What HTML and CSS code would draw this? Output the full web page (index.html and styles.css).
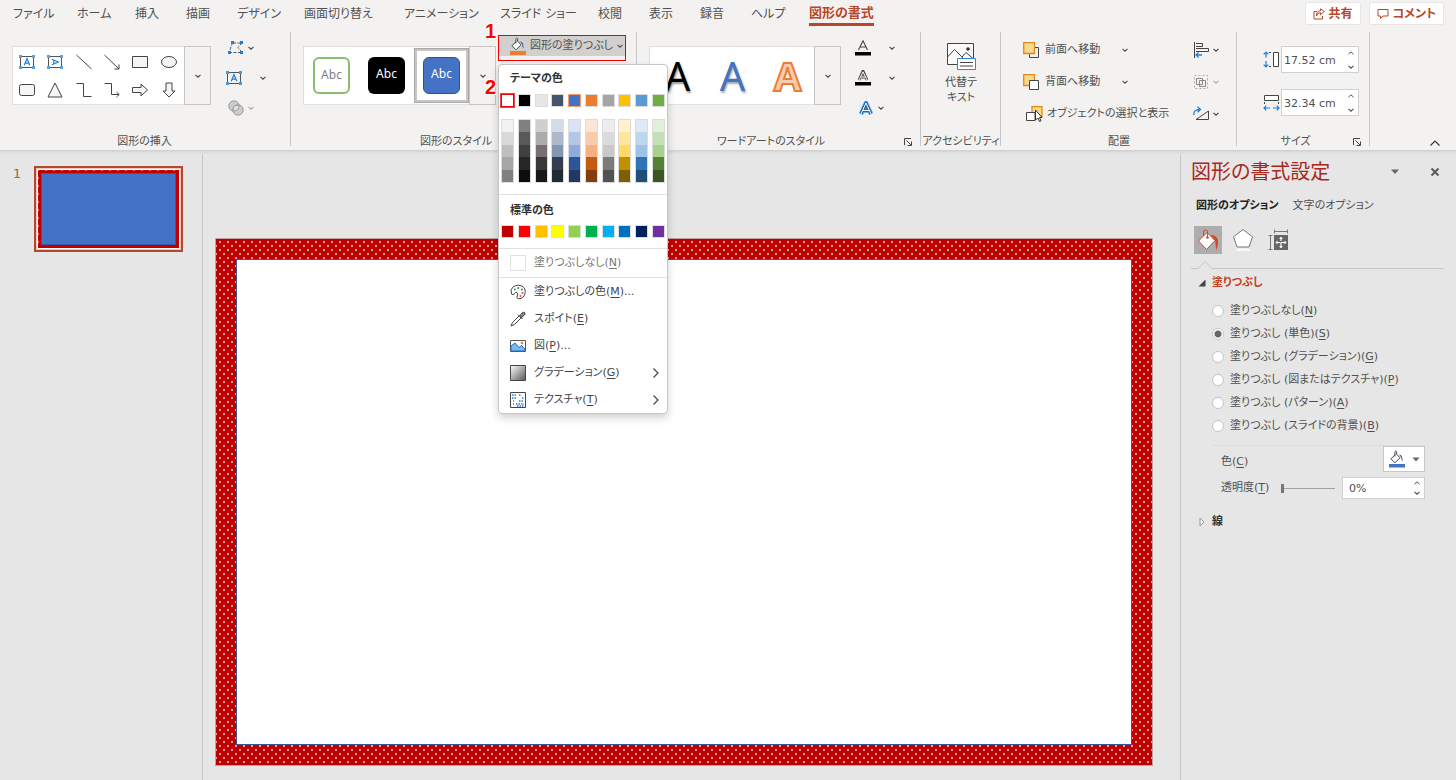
FILE: index.html
```html
<!DOCTYPE html>
<html lang="ja">
<head>
<meta charset="utf-8">
<meta name="viewport" content="width=device-width, initial-scale=1">
<title>図形の書式</title>
<link rel="stylesheet" href="styles.css">
</head>
<body>
<svg class="defs" aria-hidden="true">
  <symbol id="chev" viewBox="0 0 8 8"><path d="M1.5 2.8 4 5.2 6.5 2.8" fill="none" stroke="currentColor" stroke-width="1.1"/></symbol>
  <symbol id="chev-up" viewBox="0 0 8 8"><path d="M1.5 5.2 4 2.8 6.5 5.2" fill="none" stroke="currentColor" stroke-width="1"/></symbol>
  <symbol id="bucket" viewBox="0 0 18 18">
    <path d="M7.2 4.6 3 8.8 7 12.8 12 7.8 8.6 4.2V2.2Q8.6 1 7.6 1.2 6.8 1.4 6.9 2.4V6.5" fill="#fff" stroke="#444" stroke-width="1"/>
    <path d="M11 4.5Q14.8 4.2 14.6 11.5 13 9.8 13.3 7.4Z" fill="#2e5fb0"/>
  </symbol>
  <symbol id="launcher" viewBox="0 0 10 10"><path d="M1.5 8V1.5H8M3.5 3.5 8 8M8.5 4.5V8.5H4.5" fill="none" stroke="#444" stroke-width="1"/></symbol>
</svg>

<header class="topbar">
  <nav class="tabs">
    <a href="#">ファイル</a><a href="#">ホーム</a><a href="#">挿入</a><a href="#">描画</a><a href="#">デザイン</a><a href="#">画面切り替え</a><a href="#">アニメーション</a><a href="#">スライド ショー</a><a href="#">校閲</a><a href="#">表示</a><a href="#">録音</a><a href="#">ヘルプ</a><a href="#" class="current">図形の書式</a>
  </nav>
  <div class="top-actions">
    <button class="pill"><svg width="12" height="12" viewBox="0 0 12 12"><path d="M4 3.5H1V11H9.5V8M3.5 8Q4 4.8 7.5 4.7V6.8L11.3 3.5 7.5.8V2.8Q3.2 3.2 3.5 8Z" fill="none" stroke="#b7472a"/></svg>共有</button>
    <button class="pill"><svg width="12" height="12" viewBox="0 0 12 12"><path d="M1 1.5H11V8H6L3.5 10.5V8H1Z" fill="none" stroke="#b7472a"/></svg>コメント</button>
  </div>
</header>

<section class="ribbon">
  <div class="group g-insert">
    <div class="group-body">
      <div class="gallery">
        <div class="shapes">
          <button aria-label="テキスト ボックス"><svg width="18" height="16" viewBox="0 0 18 16"><path d="M2.5 2.5H15.5V13.5H2.5Z" fill="none" stroke="#555"/><path d="M1 1H4V4H1ZM14 1H17V4H14ZM1 12H4V15H1ZM14 12H17V15H14Z" fill="#5aa3e0"/><path d="M6.2 11.2 9 4.6 11.8 11.2M7.2 9.2H10.8" fill="none" stroke="#1f7fd4" stroke-width="1.2"/></svg></button>
          <button aria-label="縦書きテキスト ボックス"><svg width="18" height="16" viewBox="0 0 18 16"><path d="M2.5 2.5H15.5V13.5H2.5Z" fill="none" stroke="#555"/><path d="M1 1H4V4H1ZM14 1H17V4H14ZM1 12H4V15H1ZM14 12H17V15H14Z" fill="#5aa3e0"/><path d="M5.8 5.2 12.4 8 5.8 10.8M7.8 6.2V9.8" fill="none" stroke="#1f7fd4" stroke-width="1.2"/></svg></button>
          <button aria-label="線"><svg width="18" height="16" viewBox="0 0 18 16"><path d="M1.5 1 16.500 15" stroke="#444" fill="none"/></svg></button>
          <button aria-label="矢印"><svg width="18" height="16" viewBox="0 0 18 16"><path d="M1.500 1 16 15M16 10.500V15H11.500" stroke="#444" fill="none"/></svg></button>
          <button aria-label="四角形"><svg width="18" height="16" viewBox="0 0 18 16"><path d="M1.500 2.500H16.500V13.500H1.500Z" stroke="#444" fill="#f5f5f5"/></svg></button>
          <button aria-label="楕円"><svg width="18" height="16" viewBox="0 0 18 16"><ellipse cx="9" cy="8" rx="7.500" ry="5.500" stroke="#444" fill="#f5f5f5"/></svg></button>
          <button aria-label="角丸四角形"><svg width="18" height="16" viewBox="0 0 18 16"><rect x="1.500" y="2.500" width="15" height="11" rx="2" stroke="#444" fill="#f5f5f5"/></svg></button>
          <button aria-label="三角形"><svg width="18" height="16" viewBox="0 0 18 16"><path d="M9 1 16 15H2Z" stroke="#444" fill="#f5f5f5"/></svg></button>
          <button aria-label="カギ線コネクタ"><svg width="18" height="16" viewBox="0 0 18 16"><path d="M1.500 1.500H8.500V14.500H16.500" stroke="#444" fill="none"/></svg></button>
          <button aria-label="カギ線矢印コネクタ"><svg width="18" height="16" viewBox="0 0 18 16"><path d="M1.500 1.500H8.500V12.500H16M13.500 10 16.200 12.500 13.500 15" stroke="#444" fill="none"/></svg></button>
          <button aria-label="右矢印"><svg width="18" height="16" viewBox="0 0 18 16"><path d="M1.500 5.500H10V2.200L16.500 8 10 13.800V10.500H1.500Z" stroke="#444" fill="#f5f5f5"/></svg></button>
          <button aria-label="下矢印"><svg width="18" height="16" viewBox="0 0 18 16"><path d="M6 1H12V9H15L9 15 3 9H6Z" stroke="#444" fill="#f5f5f5"/></svg></button>
        </div>
        <button class="expand" aria-label="その他"><svg width="8" height="8"><use href="#chev"/></svg></button>
      </div>
      <div class="tools tools-insert">
        <button class="tool" aria-label="図形の編集"><svg width="16" height="14" viewBox="0 0 16 14"><path d="M5 2H14L10 6.500 14 11.500H2Q2 6 5 2" fill="none" stroke="#555" stroke-dasharray="3 1.500"/><path d="M3 0H6V3H3ZM12 0H15V3H12ZM12 10H15V13H12ZM0 10H3V13H0Z" fill="#1f7fd4"/></svg><svg width="8" height="8"><use href="#chev"/></svg></button>
        <button class="tool wide" aria-label="テキスト ボックスの描画"><svg width="16" height="16" viewBox="1 0 16 16"><path d="M2.500 2.500H15.500V13.500H2.500Z" fill="none" stroke="#555"/><path d="M1 1H4V4H1ZM14 1H17V4H14ZM1 12H4V15H1ZM14 12H17V15H14Z" fill="#4a98dc"/><path d="M6.200 11.200 9 4.600 11.800 11.200M7.200 9.200H10.800" fill="none" stroke="#1f7fd4" stroke-width="1.200"/></svg><svg width="8" height="8"><use href="#chev"/></svg></button>
        <button class="tool off" aria-label="図形の結合" disabled><svg width="16" height="16" viewBox="0 0 16 16"><circle cx="6" cy="6" r="5.200" fill="#ccc" stroke="#999"/><circle cx="10" cy="10" r="5.200" fill="#ccc" stroke="#999"/><path d="M5 10Q4.500 5 10.800 5.200 12 10 6 11.200Z" fill="#e2e2e2" stroke="#999"/></svg><svg width="8" height="8"><use href="#chev"/></svg></button>
      </div>
    </div>
    <div class="group-label">図形の挿入</div>
  </div>

  <div class="group g-style">
    <div class="group-body">
      <div class="gallery">
        <div class="styles">
          <button><span class="preset outline">Abc</span></button>
          <button><span class="preset dark">Abc</span></button>
          <button class="picked"><span class="preset blue">Abc</span></button>
        </div>
        <button class="expand" aria-label="その他"><svg width="8" height="8"><use href="#chev"/></svg></button>
      </div>
      <div class="fill-anchor">
        <button class="fill-button" aria-haspopup="menu"><span class="fill-face"><svg width="18" height="18" viewBox="0 0 18 18"><use href="#bucket" width="18" height="18"/><path d="M1 14H17V18H1Z" fill="#ed7d31"/></svg>図形の塗りつぶし<svg width="8" height="8"><use href="#chev"/></svg></span></button>
        <span class="callout one">1</span>
        <span class="callout two">2</span>
        <div class="menu">
          <h3>テーマの色</h3>
          <div class="swatches" id="theme"></div>
          <div class="swatches shades" id="shades"></div>
          <hr>
          <h3>標準の色</h3>
          <div class="swatches" id="standard"></div>
          <hr>
          <button class="item none"><span class="empty"></span><span>塗りつぶしなし(<u>N</u>)</span></button>
          <hr>
          <button class="item"><svg width="16" height="16" viewBox="0 0 16 16"><path d="M1.500 10Q-.5 5.500 3.500 2.500 7.500 0 12 2 16 4.500 15 9.500 13.500 14.500 9 14.800 6 14.500 7.300 12 8.500 9.500 7 8.500 5.500 8 4.500 9.800 3 11.500 1.500 10Z" fill="#fff" stroke="#444"/><circle cx="4.800" cy="5.500" r="1" fill="#3a9b4a"/><circle cx="8.300" cy="4" r="1" fill="#3a9b4a"/><circle cx="11.800" cy="5.500" r="1" fill="#2b7cd3"/><circle cx="12.500" cy="9" r="1" fill="#e04b3a"/><circle cx="10.500" cy="12" r="1" fill="#e04b3a"/></svg><span>塗りつぶしの色(<u>M</u>)...</span></button>
          <button class="item"><svg width="16" height="16" viewBox="0 0 16 16"><path d="M9 5 2.500 11.500 1 15 4.500 13.500 11 7" fill="#fff" stroke="#444"/><path d="M8 3.500 12.500 8M9.500 5 12 2Q13.500.6 14.800 1.700 15.600 3 14 4.500L11 7Z" fill="#888" stroke="#444"/></svg><span>スポイト(<u>E</u>)</span></button>
          <button class="item"><svg width="16" height="16" viewBox="0 0 16 16"><path d="M.5 2.500H15.500V13.500H.5Z" fill="#fff" stroke="#555"/><path d="M1 8 5 5 9 9.500 11.500 7.500 15 11V13H1Z" fill="#7db8ec" stroke="#1f6fc0"/><circle cx="12" cy="5" r="1.300" fill="#ed7d31"/></svg><span>図(<u>P</u>)...</span></button>
          <button class="item"><svg width="16" height="16" viewBox="0 0 16 16"><defs><linearGradient id="gr" x1="0" y1="0" x2="1" y2="1"><stop offset="0" stop-color="#fff"/><stop offset="1" stop-color="#555"/></linearGradient></defs><path d="M.5.5H15.500V15.500H.5Z" fill="url(#gr)" stroke="#444"/></svg><span>グラデーション(<u>G</u>)</span><svg class="more" width="8" height="12" viewBox="0 0 8 12"><path d="M1.500 1.500 6 6 1.500 10.500" fill="none" stroke="#444" stroke-width="1.200"/></svg></button>
          <button class="item"><svg width="16" height="16" viewBox="0 0 16 16"><path d="M.5.5H15.500V15.500H.5Z" fill="#fff" stroke="#444"/><path d="M2 3H7M2 6H6M9 3H11M3 9H4M12 6H14M9 9H14M6 12H14M3 12H4M7 14H14" stroke="#2b7cd3" stroke-width="1.500" stroke-dasharray="1.500 1"/></svg><span>テクスチャ(<u>T</u>)</span><svg class="more" width="8" height="12" viewBox="0 0 8 12"><path d="M1.500 1.500 6 6 1.500 10.500" fill="none" stroke="#444" stroke-width="1.200"/></svg></button>
        </div>
      </div>
    </div>
    <div class="group-label">図形のスタイル</div>
  </div>

  <div class="group g-art">
    <div class="group-body">
      <div class="gallery">
        <div class="arts"><button class="art black">A</button><button class="art azure">A</button><button class="art orange">A</button></div>
        <button class="expand" aria-label="その他"><svg width="8" height="8"><use href="#chev"/></svg></button>
      </div>
      <div class="tools tools-art">
        <button class="tool wide" aria-label="文字の塗りつぶし"><svg width="16" height="16" viewBox="0 0 16 16"><path d="M3.500 10 8 .8 12.500 10M5 7H11" fill="none" stroke="#444" stroke-width="1.100"/><path d="M0 12H16V15.500H0Z"/></svg><svg width="8" height="8"><use href="#chev"/></svg></button>
        <button class="tool wide" aria-label="文字の輪郭"><svg width="16" height="16" viewBox="0 0 16 16"><path d="M4 10 8 1 12 10M5.500 7H10.500" fill="none" stroke="#444" stroke-width="2.800"/><path d="M4 10 8 1.800 12 10M5.500 7H10.500" fill="none" stroke="#fff" stroke-width="1"/><path d="M0 12H16V15.500H0Z"/></svg><svg width="8" height="8"><use href="#chev"/></svg></button>
        <button class="tool glow" aria-label="文字の効果"><svg width="16" height="16" viewBox="0 0 16 16"><path d="M3 14 8 3 13 14M5 10.500H11" fill="none" stroke="#9ccbf2" stroke-width="5" stroke-linejoin="round"/><path d="M3 14 8 3 13 14M5 10.500H11" fill="none" stroke="#1668b8" stroke-width="3.400" stroke-linejoin="round"/><path d="M3 14 8 3 13 14M5 10.500H11" fill="none" stroke="#fff" stroke-width="1"/></svg><svg width="8" height="8"><use href="#chev"/></svg></button>
      </div>
    </div>
    <div class="group-label">ワードアートのスタイル<button class="launch" aria-label="詳細"><svg width="10" height="10"><use href="#launcher"/></svg></button></div>
  </div>

  <div class="group g-access">
    <button class="alt"><svg width="32" height="30" viewBox="0 0 32 30"><path d="M2.500 2.500H28.500V23.500H2.500Z" fill="#fafafa" stroke="#444"/><path d="M2.500 16 9.500 8.500 20 19M17 16 21 11.500 28.500 18" fill="none" stroke="#444"/><circle cx="23" cy="8" r="1.800" fill="#333"/><path d="M12.500 17.500H30.500V28.500H12.500Z" fill="#fff" stroke="#2b88d8"/><path d="M15 21.500H28M15 25H28" stroke="#444"/></svg>代替テ<br>キスト</button>
    <div class="group-label">アクセシビリティ</div>
  </div>

  <div class="group g-arrange">
    <div class="group-body">
      <div class="orders">
        <button class="order"><svg width="16" height="16" viewBox="0 0 16 16"><path d="M12 5.500H15.500V15.500H6.500V12" fill="none" stroke="#444"/><path d="M.7.700H11.500V11.500H.7Z" fill="#fbd98a" stroke="#e08a1e" stroke-width="1.300"/></svg><span>前面へ移動</span><svg width="8" height="8"><use href="#chev"/></svg></button>
        <button class="order"><svg width="16" height="16" viewBox="0 0 16 16"><path d="M.7.700H11.500V11.500H.7Z" fill="#fbd98a" stroke="#e08a1e" stroke-width="1.300"/><path d="M6.500 6.500H15.500V15.500H6.500Z" fill="#fff" stroke="#444"/></svg><span>背面へ移動</span><svg width="8" height="8"><use href="#chev"/></svg></button>
        <button class="order select"><svg width="17" height="16" viewBox="0 0 17 16"><path d="M6 .7H16V10.500H6Z" fill="#fbd98a" stroke="#e08a1e" stroke-width="1.300"/><path d="M.5 6.500H9V14.500H.5Z" fill="#fff" stroke="#444"/><path d="M9.500 4V14L12 12 13.500 15.500 15 14.800 13.500 11.500H16Z" fill="#fff" stroke="#333"/></svg><span>オブジェクトの選択と表示</span></button>
      </div>
      <div class="tools tools-arrange">
        <button class="tool" aria-label="配置"><svg width="16" height="16" viewBox="0 0 16 16"><path d="M1.500 0V16M3 1.500H9.500V4.500H3M3 6.500H15.500V9.500H3" fill="none" stroke="#444"/><path d="M3 13H9M5.500 10.500 3 13 5.500 15.500" fill="none" stroke="#1f7fd4" stroke-width="1.300"/></svg><svg width="8" height="8"><use href="#chev"/></svg></button>
        <button class="tool off" aria-label="グループ化" disabled><svg width="16" height="16" viewBox="0 0 16 16"><path d="M1.500 1.500H14.500V14.500H1.500Z" fill="none" stroke="#aaa" stroke-dasharray="2 2"/><path d="M3.500 4.500H9.500V10.500H3.500ZM6.500 6.500H12.500V12.500H6.500Z" fill="none" stroke="#888"/></svg><svg width="8" height="8"><use href="#chev"/></svg></button>
        <button class="tool" aria-label="回転"><svg width="16" height="16" viewBox="0 0 16 16"><path d="M15.500 5V13.500H3Z" fill="none" stroke="#444"/><path d="M1 9Q0 3.500 7 3.500M4.500.8 7.500 3.500 4.500 6.200" fill="none" stroke="#1f7fd4" stroke-width="1.300"/></svg><svg width="8" height="8"><use href="#chev"/></svg></button>
      </div>
    </div>
    <div class="group-label">配置</div>
  </div>

  <div class="group g-size">
    <div class="sizes">
      <div class="size"><label for="h"><svg width="17" height="17" viewBox="0 0 17 17"><path d="M3 1V6.500M3 10V16M.7 3.300 3 1 5.300 3.300M.7 13.700 3 16 5.300 13.700" fill="none" stroke="#1f7fd4" stroke-width="1.200"/><path d="M6 1.500H9M6 15.500H9" stroke="#444" stroke-dasharray="2 1"/><path d="M10.500 1.500H15.500V15.500H10.500Z" fill="#fff" stroke="#444"/></svg></label><span class="spin"><input id="h" aria-label="高さ" value="17.52 cm"><span class="arrows"><button aria-label="増やす"><svg width="8" height="8"><use href="#chev-up"/></svg></button><button aria-label="減らす"><svg width="8" height="8"><use href="#chev"/></svg></button></span></span></div>
      <div class="size"><label for="w"><svg width="17" height="17" viewBox="0 0 17 17"><path d="M1.500 1.500H15.500V6.500H1.500Z" fill="#fff" stroke="#444"/><path d="M1.500 8V11M15.500 8V11" stroke="#444" stroke-dasharray="2 1"/><path d="M1 14H7M10 14H16M3.300 11.700 1 14 3.300 16.300M13.700 11.700 16 14 13.700 16.300" fill="none" stroke="#1f7fd4" stroke-width="1.200"/></svg></label><span class="spin"><input id="w" aria-label="幅" value="32.34 cm"><span class="arrows"><button aria-label="増やす"><svg width="8" height="8"><use href="#chev-up"/></svg></button><button aria-label="減らす"><svg width="8" height="8"><use href="#chev"/></svg></button></span></span></div>
    </div>
    <div class="group-label">サイズ<button class="launch" aria-label="詳細"><svg width="10" height="10"><use href="#launcher"/></svg></button></div>
  </div>
  <button class="collapse" aria-label="リボンを折りたたむ"><svg width="12" height="8" viewBox="0 0 12 8"><path d="M1.500 6.500 6 2 10.500 6.500" fill="none" stroke="#333" stroke-width="1.100"/></svg></button>
</section>

<main class="work">
  <aside class="thumbs">
    <span class="num">1</span>
    <button class="thumb" aria-label="スライド 1"><span class="thumb-page"><span class="thumb-shape"></span></span></button>
  </aside>
  <section class="canvas"><div class="slide"><div class="slide-shape"></div></div></section>
  <aside class="pane">
    <div class="pane-head">
      <h2>図形の書式設定</h2>
      <button aria-label="オプション"><svg width="10" height="6" viewBox="0 0 10 6"><path d="M1 .5H9L5 5Z" fill="#666"/></svg></button>
      <button aria-label="閉じる"><svg width="10" height="10" viewBox="0 0 10 10"><path d="M1.500 1.500 8.500 8.500M8.500 1.500 1.500 8.500" stroke="#5a5a5a" stroke-width="2"/></svg></button>
    </div>
    <div class="pane-tabs"><a href="#" class="on">図形のオプション</a><a href="#">文字のオプション</a></div>
    <div class="pane-icons">
      <button class="on" aria-label="塗りつぶしと線"><svg width="22" height="22" viewBox="0 0 22 22"><path d="M10 3.500 1.500 12 9.500 20.500 18 11.500Z" fill="#fff" stroke="#d24726"/><path d="M6.500 7V3Q6.500 1 8.500 1 10.500 1 10.500 3V8" fill="none" stroke="#d24726"/><circle cx="10.500" cy="8.500" r="1.300" fill="#d24726"/><path d="M13.500 6Q20 6 21 11.500 21.500 17 19 21.500 18.800 14 18 11.500Z" fill="#d24726"/></svg></button>
      <button aria-label="効果"><svg width="22" height="24" viewBox="0 0 22 24"><path d="M11 1.500 20.500 8.800 17 19H5L1.500 8.800Z" fill="#fff" stroke="#777"/><path d="M5 20.500H17L18 23H4Z" fill="#fff" opacity=".7"/></svg></button>
      <button aria-label="サイズとプロパティ"><svg width="20" height="22" viewBox="0 0 20 22"><path d="M6 2.500H19M6.500.5V4.500M19.500.5V4.500M2.500 6V20M.5 6.500H4.500M.5 20.500H4.500" stroke="#777" fill="none"/><path d="M6 6H20V21H6Z" fill="#666"/><path d="M13 8V19M8 13.500H18" stroke="#fff" stroke-width="1.200" stroke-dasharray="4 1"/><path d="M11 10 13 8 15 10ZM11 17 13 19 15 17ZM9.500 11.500 7.500 13.500 9.500 15.500ZM16.500 11.500 18.500 13.500 16.500 15.500Z" fill="#fff"/></svg></button>
    </div>
    <div class="notch"><svg width="24" height="10" viewBox="0 0 24 10"><path d="M0 10V9H7L14 1.500 21 9H24V10Z" fill="#e6e6e6"/><path d="M0 8.500H7L14 1.500 21 8.500H24" fill="none" stroke="#c6c6c6"/></svg></div>
    <button class="section accent"><svg width="8" height="8" viewBox="0 0 8 8"><path d="M7.500.5V7.500H.5Z" fill="#444"/></svg>塗りつぶし</button>
    <fieldset class="options">
      <label><input type="radio" name="fill"><span>塗りつぶしなし(<u>N</u>)</span></label>
      <label><input type="radio" name="fill" checked><span>塗りつぶし (単色)(<u>S</u>)</span></label>
      <label><input type="radio" name="fill"><span>塗りつぶし (グラデーション)(<u>G</u>)</span></label>
      <label><input type="radio" name="fill"><span>塗りつぶし (図またはテクスチャ)(<u>P</u>)</span></label>
      <label><input type="radio" name="fill"><span>塗りつぶし (パターン)(<u>A</u>)</span></label>
      <label><input type="radio" name="fill"><span>塗りつぶし (スライドの背景)(<u>B</u>)</span></label>
    </fieldset>
    <div class="field"><label for="color">色(<u>C</u>)</label><button id="color" class="color"><svg width="18" height="18" viewBox="0 0 18 18"><use href="#bucket" width="18" height="18"/><path d="M1 14H17V17.500H1Z" fill="#4472c4"/></svg><svg width="8" height="5" viewBox="0 0 8 5"><path d="M.5.5H7.500L4 4.500Z" fill="#666"/></svg></button></div>
    <div class="field"><label for="alpha">透明度(<u>T</u>)</label><input id="alpha" type="range" min="0" max="100" value="0"><span class="spin"><input aria-label="透明度の値" value="0%"><span class="arrows"><button aria-label="増やす"><svg width="8" height="8"><use href="#chev-up"/></svg></button><button aria-label="減らす"><svg width="8" height="8"><use href="#chev"/></svg></button></span></span></div>
    <button class="section line"><svg width="8" height="10" viewBox="0 0 8 10"><path d="M2 1 6 5 2 9Z" fill="#f5f5f5" stroke="#999"/></svg>線</button>
  </aside>
</main>
<script src="script.js"></script>
</body>
</html>
```
FILE: styles.css
```css
* { box-sizing: border-box; }
html { height: 100%; }
body {
  margin: 0;
  min-height: 100%;
  display: flex;
  flex-direction: column;
  font: 11px/16px "DejaVu Sans", "Noto Sans CJK JP", sans-serif;
  font-feature-settings: "palt";
  color: #505050;
  background: #e6e6e6;
  overflow-x: hidden;
}
button, input { font: inherit; font-feature-settings: inherit; color: inherit; margin: 0; }
button { border: 0; padding: 0; background: none; }
a { color: inherit; text-decoration: none; }
h2, h3 { margin: 0; }
svg { display: block; flex: none; }
u { text-underline-offset: 2px; }
.defs { position: absolute; width: 0; height: 0; }

/* Top bar */
.topbar { display: flex; justify-content: space-between; background: #f3f2f1; padding: 2px 12px 0 13px; height: 30px; }
.tabs {
  display: grid;
  grid-template-columns: 64px 58px 51px 51px 67px 100px 96px 98px 51px 51px 51px 58px auto;
  font-size: 12px;
  line-height: 25px;
  white-space: nowrap;
  align-items: start;
}
.tabs .current { color: #b7472a; font-size: 13px; font-weight: 700; border-bottom: 3px solid #b7472a; line-height: 20px; padding-top: 1px; }
.top-actions { display: flex; gap: 8px; align-items: start; }
.pill { display: flex; align-items: center; gap: 4px; height: 23px; padding: 0 7px; background: #fff; border: 1px solid #e8e6e4; border-radius: 2px; color: #b7472a; font-weight: 700; font-size: 12px; white-space: nowrap; }

/* Ribbon */
.ribbon { position: relative; z-index: 2; display: flex; height: 120px; background: #f3f2f1; }
.ribbon::after { content: ""; position: absolute; left: 0; right: 0; top: 100%; height: 4px; background: linear-gradient(#cfcfcf, #e6e6e6); z-index: -1; }
.group { flex: none; display: flex; flex-direction: column; justify-content: space-between; position: relative; padding: 16px 0 0 12px; }
.group::after { content: ""; position: absolute; right: 0; top: 2px; bottom: 4px; width: 1px; background: #c8c6c4; }
.group-body { display: flex; align-items: start; }
.group-label { position: relative; text-align: center; white-space: nowrap; padding-right: 14px; }
.launch { position: absolute; right: 8px; top: 3px; }
.g-insert { width: 291px; }
.g-style { width: 346px; z-index: 3; }
.g-style .group-label { padding-right: 28px; }
.g-art { width: 284px; }
.g-art .group-label { padding-right: 28px; }
.g-access { width: 80px; padding-left: 0; }
.g-access .group-label { padding: 0; }
.g-arrange { width: 236px; padding-left: 22px; }
.g-arrange .group-label { padding-right: 22px; }
.g-size { width: 133px; padding-left: 26px; }
.g-size .group-label { padding-right: 42px; }
.gallery { display: flex; width: 199px; height: 59px; background: #fff; border: 1px solid #e1dfdd; }
.expand { flex: none; width: 27px; margin: -1px; background: #f3f2f1; border: 1px solid #c8c6c4; display: grid; place-items: center; color: #444; }
.shapes { flex: 1; display: grid; grid-template: 28px 28px / repeat(6, 1fr); padding: 1px 2px 0 0; }
.shapes button, .styles button, .arts button { display: grid; place-items: center; }
.tools { display: flex; flex-direction: column; gap: 14px; color: #444; }
.tools-insert { padding-left: 17px; margin-top: -6px; }
.tools-art { padding-left: 14px; margin-top: -6px; }
.tools-arrange { gap: 16px; margin: -4px 0 0 28px; }
.tool { display: flex; align-items: center; gap: 3px; height: 16px; }
.tool.wide { gap: 17px; }
.tools-insert .wide { margin-left: -2px; }
.tool.glow { margin-left: 3px; }
.off { color: #a8a8a8; }

.styles { display: flex; padding: 1px 0; }
.styles button { width: 55px; }
.preset { width: 37px; height: 37px; border-radius: 6px; font: 12px/31px "Noto Sans", sans-serif; border: 1px solid transparent; }
.preset.outline { border: 2px solid #8cbd6c; background: #fff; color: #7f7f7f; }
.preset.dark { background: #000; color: #fff; }
.preset.blue { background: #4472c4; border-color: #2f528f; color: #fff; }
.styles .picked { border: 3px solid #c8c6c4; outline: 1px solid #a8a8a8; outline-offset: -1px; }
.arts { display: flex; flex: 1; }
.art { flex: 1; font: 40px/57px "Noto Sans", sans-serif; }
.art.black { color: #000; text-shadow: 1px 2px 2px #999; }
.art.azure { color: #4472c4; text-shadow: 1px 2px 2px #aaa; }
.art.orange { color: #f8cbad; font-weight: 700; -webkit-text-stroke: 2px #ed7d31; }

/* Fill button and its menu */
.fill-anchor { position: relative; z-index: 1; margin: -11px 0 0 2px; }
.g-style .gallery { width: 193px; justify-content: space-between; }
.g-art .gallery { width: 192px; }
.fill-button { display: block; width: 128px; height: 26px; border: 1px solid #f00000; padding: 0 0 4px; }
.fill-face { display: flex; align-items: center; gap: 3px; height: 20px; background: #d2d0ce; padding-left: 10px; white-space: nowrap; }
.callout { position: absolute; left: -13px; font: 700 20px/20px "Liberation Sans", Arial, sans-serif; color: #f00; text-shadow: 0 0 2px #fff, 0 0 2px #fff, 1px 1px #fff, -1px -1px #fff; }
.callout.one { top: -14px; }
.callout.two { top: 42px; }
.menu { position: absolute; left: 0; top: 29px; width: 170px; background: #fff; border: 1px solid #c6c6c6; border-radius: 4px; box-shadow: 0 4px 8px rgba(0, 0, 0, .18); padding: 5px 0 0; }
.menu h3 { font-size: 11px; line-height: 18px; color: #333; padding-left: 11px; }
.menu hr { border: 0; border-top: 1px solid #e1e1e1; margin: 0; }
.swatches { display: flex; justify-content: space-between; padding: 0 2px; }
.swatches button { width: 13px; height: 13px; border: 1px solid #dcdcdc; }
#theme { padding: 6px 2px 12px; }
#theme .target { border-color: #f00000; box-shadow: 0 0 0 1px #f04040; }
#theme .chosen { border-color: #f4a070; }
.shades div { display: flex; flex-direction: column; border: 1px solid #dcdcdc; width: 13px; height: 64px; }
.shades div button { width: 11px; height: auto; flex: 1; border: 0; }
.shades { padding-bottom: 11px; }
.menu hr + h3 { padding-top: 7px; }
#standard { padding: 5px 2px 10px; }
.item { display: flex; align-items: center; gap: 8px; width: 100%; height: 27px; padding: 0 7px 0 11px; text-align: left; white-space: nowrap; color: #444; }
.item.none { height: 28px; color: #777; }
.empty { width: 16px; height: 16px; border: 1px solid #e1e1e1; }
.more { margin-left: auto; }

/* Right-hand groups */
.alt { display: block; line-height: 15px; margin: -5px auto 0; }
.alt svg { margin: 0 auto 4px; }
.orders { display: flex; flex-direction: column; gap: 16px; margin-top: -4px; width: 142px; }
.order { display: flex; align-items: center; gap: 6px; height: 16px; white-space: nowrap; text-align: left; }
.order span { width: 70px; }
.order.select { padding-left: 3px; gap: 4px; }
.sizes { display: flex; flex-direction: column; gap: 16px; }
.size { display: flex; align-items: center; gap: 1px; }
.spin { position: relative; display: block; }
.spin input { display: block; width: 78px; height: 27px; border: 1px solid #d2d0ce; background: #fff; padding: 2px 2px 0; }
.arrows { position: absolute; right: 4px; top: 3px; bottom: 2px; display: flex; flex-direction: column; justify-content: space-between; }
.collapse { position: absolute; right: 15px; bottom: 3px; }

/* Work area */
.work { flex: 1; display: flex; align-items: stretch; }
.thumbs { flex: none; width: 203px; border-right: 1px solid #c8c8c8; padding: 16px 19px 0 13px; display: flex; align-items: start; justify-content: space-between; }
.num { color: #c8502f; font-size: 13px; }
.thumb { width: 149px; height: 86px; border: 2px solid #b7472a; background: #e9c9c0; padding: 1px; }
.thumb-page { display: block; height: 100%; padding: 3px; border: 1px solid #fff; background: radial-gradient(circle, #d87070 1px, transparent 1px) -4px -4px / 8px 8px, #c00000; }
.thumb-shape { display: block; height: 100%; background: #4472c4; border: 1px solid #3f579f; }
.canvas { flex: 1; min-width: 0; padding: 88px 27px 12px 12px; }
.slide {
  aspect-ratio: 16 / 9;
  padding: 20px;
  border: 1px solid #c4a0a0;
  background:
    radial-gradient(circle at 4px 3px, #e8a0a0 1px, transparent 1px) 0 0 / 8px 8px,
    radial-gradient(circle at 4px 3px, #e8a0a0 1px, transparent 1px) 4px 4px / 8px 8px,
    #c00000;
}
.slide-shape { height: 100%; background: #fff; border: 1px solid #3f5790; }

/* Format pane */
.pane { flex: none; width: 276px; border-left: 1px solid #c8c8c8; padding: 8px 12px 0 10px; }
.pane-head { display: flex; align-items: center; gap: 30px; padding-right: 4px; }
.pane-head h2 { flex: 1; font-size: 20px; line-height: 28px; font-weight: 400; color: #a8281e; white-space: nowrap; }
.pane-tabs { display: flex; gap: 14px; padding: 12px 0 0 5px; white-space: nowrap; }
.pane-tabs .on { font-weight: 700; color: #222; }
.pane-icons { display: flex; align-items: center; gap: 7px; padding: 12px 0 6px 3px; }
.pane-icons button { width: 28px; height: 28px; display: grid; place-items: center; }
.pane-icons .on { background: #adadad; }
.notch { background: linear-gradient(#c6c6c6, #c6c6c6) 0 100% / 100% 1px no-repeat; height: 9px; }
.section { display: flex; align-items: center; gap: 6px; padding: 6px 0 0 7px; font-weight: 700; color: #333; }
.section.accent { color: #c43e1c; }
.section.line { padding-top: 15px; }
.options { border: 0; border-bottom: 1px solid #dcdcdc; margin: 9px 20px 0 21px; padding: 0 0 8px; display: grid; row-gap: 1px; }
.options label { display: flex; align-items: center; gap: 6px; height: 22px; white-space: nowrap; }
.options input { appearance: none; width: 12px; height: 12px; margin: 0; border-radius: 50%; background: #fff; border: 1px solid #c4c4c4; }
.options input:checked { background: radial-gradient(circle, #666 3px, #fff 4px); }
.field { display: flex; align-items: center; padding: 0 19px 0 30px; white-space: nowrap; }
.color { margin: 0 0 5px auto; width: 42px; height: 26px; background: #fff; border: 1px solid #c6c6c6; display: flex; align-items: center; justify-content: center; gap: 6px; }
.field .spin { margin-left: auto; }
.field .spin input { width: 83px; height: 22px; padding: 0 6px; }
.field .arrows { top: 2px; bottom: 2px; }
#alpha { appearance: none; width: 54px; height: 12px; margin-left: 12px; background: linear-gradient(#a0a0a0, #a0a0a0) center / 100% 1px no-repeat; }
#alpha::-webkit-slider-thumb { appearance: none; width: 3px; height: 9px; background: #777; }
```
FILE: script.js
```js
const theme = [
  ["#ffffff", "#f2f2f2", "#d9d9d9", "#bfbfbf", "#a6a6a6", "#808080"],
  ["#000000", "#808080", "#595959", "#404040", "#262626", "#0d0d0d"],
  ["#e7e6e6", "#d0cece", "#aeabab", "#757171", "#3b3838", "#171717"],
  ["#44546a", "#d6dce5", "#adb9ca", "#8497b0", "#333f50", "#222a35"],
  ["#4472c4", "#dae3f3", "#b4c7e7", "#8faadc", "#2f5597", "#203864"],
  ["#ed7d31", "#fbe5d6", "#f8cbad", "#f4b183", "#c55a11", "#843c0c"],
  ["#a5a5a5", "#ededed", "#dbdbdb", "#c9c9c9", "#7b7b7b", "#525252"],
  ["#ffc000", "#fff2cc", "#ffe699", "#ffd966", "#bf9000", "#7f6000"],
  ["#5b9bd5", "#deebf7", "#bdd7ee", "#9dc3e6", "#2e75b6", "#1f4e79"],
  ["#70ad47", "#e2f0d9", "#c5e0b4", "#a9d18e", "#548235", "#385723"]
];
const standard = ["#c00000", "#ff0000", "#ffc000", "#ffff00", "#92d050", "#00b050", "#00b0f0", "#0070c0", "#002060", "#7030a0"];

function swatch(color) {
  const b = document.createElement("button");
  b.style.background = color;
  b.setAttribute("aria-label", color);
  return b;
}

theme.forEach(([base, ...tones], i) => {
  const b = swatch(base);
  if (i === 0) b.className = "target";
  if (i === 4) b.className = "chosen";
  document.getElementById("theme").append(b);
  const column = document.createElement("div");
  column.append(...tones.map(swatch));
  document.getElementById("shades").append(column);
});
document.getElementById("standard").append(...standard.map(swatch));
```
